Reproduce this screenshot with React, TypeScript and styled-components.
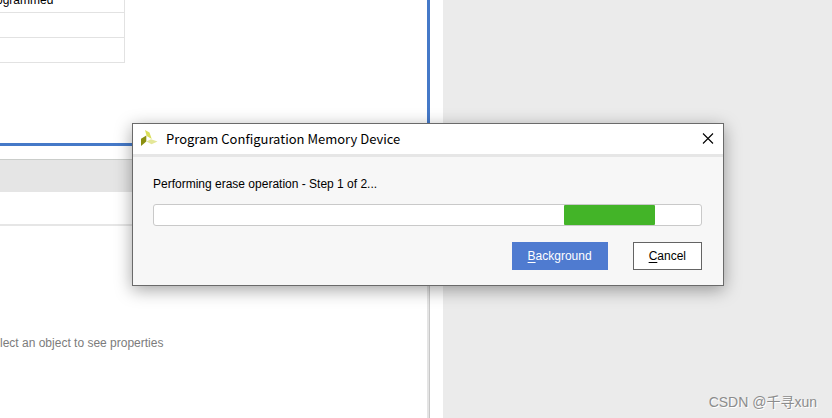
import React from "react";
import styled, { createGlobalStyle } from "styled-components";

const GlobalStyle = createGlobalStyle`
  *, *::before, *::after { box-sizing: border-box; }
  html, body, #root { height: 100%; }
  body {
    margin: 0;
    overflow: hidden;
    background: #ebebeb;
    color: #000;
    font: 12px/16px "Liberation Sans", Arial, sans-serif;
  }
`;

const Workspace = styled.div`
  position: relative;
  display: grid;
  grid-template-columns: minmax(0, 443fr) minmax(0, 389fr);
  height: 100%;
  overflow: hidden;
`;

const Column = styled.div`
  display: flex;
  flex-direction: column;
  gap: 13px;
  padding-right: 13px;
  background: #fff;
`;

const HardwarePanel = styled.section`
  height: 146px;
  overflow: hidden;
  border: solid #4579c8;
  border-width: 0 3px 3px 0;
`;

const StatusTable = styled.table`
  width: 129px;
  margin: -13px 0 0 -4px;
  border-collapse: separate;
  border-spacing: 0;
`;

const StatusCell = styled.td`
  height: 26px;
  padding: 0;
  border: solid #e2e2e2;
  border-width: 0 1px 1px 0;
  line-height: 16px;

  tr + tr & { height: 25px; }
`;

const PropertiesPanel = styled.section`
  display: flex;
  flex: 1;
  flex-direction: column;
  border-right: 1px solid #c8c8c8;
  box-shadow: inset -2px 0 #e4e4e4;
`;

const PanelHeader = styled.header`
  height: 33px;
  border-top: 1px solid #cacdca;
  background: #e5e5e5;
`;

const PanelToolbar = styled.div`
  height: 34px;
  margin-right: 2px;
  border-bottom: 2px solid #e6e6e6;
`;

const EmptyMessage = styled.p`
  margin: 109px 0 0;
  color: #7c7c7c;
  white-space: nowrap;
`;

const SidePane = styled.aside`
  display: flex;
  align-items: flex-end;
  justify-content: flex-end;
  padding: 0 15px 5px;
`;

const Watermark = styled.span`
  color: #8c8c8c;
  font: 14px/22px "Liberation Sans", "Noto Sans CJK SC", sans-serif;
  text-shadow: 1px 1px #fff;
`;

const Dialog = styled.div`
  position: absolute;
  top: 123px;
  right: 108px;
  left: 132px;
  border: 1px solid #6a6a6a;
  background: #f7f7f7;
  box-shadow: 0 4px 16px rgba(0, 0, 0, 0.36);
`;

const TitleBar = styled.header`
  display: flex;
  align-items: center;
  height: 33px;
  padding: 0 7px;
  border-bottom: 3px solid #e6e6e6;
  background: #fff;
`;

const Title = styled.h1`
  flex: 1;
  margin: 0 0 0 8px;
  font: 400 13px/16px "Noto Sans CJK SC", sans-serif;
`;

const CloseButton = styled.button`
  display: flex;
  padding: 2px;
  border: 0;
  background: none;
  color: #000;
`;

const DialogBody = styled.div`
  padding: 19px 21px 15px 20px;
`;

const ProgressLabel = styled.p`
  margin: 0 0 12px;
`;

const ProgressTrack = styled.div`
  display: flex;
  height: 22px;
  border: 1px solid #c9c9c9;
  border-radius: 3px;
  background: #fff;
`;

const ProgressBlock = styled.div`
  width: 91px;
  margin-left: 75%;
  border-radius: 1px;
  background: #43b428;
`;

const Actions = styled.div`
  display: flex;
  justify-content: flex-end;
  gap: 25px;
  margin-top: 16px;
`;

const ActionButton = styled.button<{ $primary?: boolean }>`
  height: 28px;
  padding: 0 15px;
  border: 1px solid ${({ $primary }) => ($primary ? "#4f7bd0" : "#646464")};
  border-radius: 0;
  background: ${({ $primary }) => ($primary ? "#4f7bd0" : "#fff")};
  color: ${({ $primary }) => ($primary ? "#fff" : "#000")};
  font: inherit;
`;

const Mnemonic = styled.u`
  text-underline-offset: 2px;
`;

function AppLogo() {
  return (
    <svg width="18" height="18" viewBox="0 0 18 18" aria-hidden="true">
      <path d="M5 0 9.5 2.5 11.7 9 6.7 6z" fill="#dade58" />
      <path d="M1 8.7 6.3 5.5V11.5L1 16z" fill="#8b9010" />
      <path d="M6.5 11.5 11 9.3 17.5 11.5 11.5 14.2z" fill="#e4e798" />
    </svg>
  );
}

export default function App() {
  return (
    <>
      <GlobalStyle />
      <Workspace>
        <Column>
          <HardwarePanel>
            <StatusTable>
              <tbody>
                <tr><StatusCell>ogrammed</StatusCell></tr>
                <tr><StatusCell /></tr>
                <tr><StatusCell /></tr>
              </tbody>
            </StatusTable>
          </HardwarePanel>
          <PropertiesPanel>
            <PanelHeader />
            <PanelToolbar />
            <EmptyMessage>lect an object to see properties</EmptyMessage>
          </PropertiesPanel>
        </Column>
        <SidePane>
          <Watermark>CSDN @千寻xun</Watermark>
        </SidePane>
        <Dialog role="dialog" aria-labelledby="dialog-title">
          <TitleBar>
            <AppLogo />
            <Title id="dialog-title">Program Configuration Memory Device</Title>
            <CloseButton type="button" aria-label="Close">
              <svg width="12" height="12" viewBox="0 0 12 12" aria-hidden="true">
                <path d="M1 0.5 11 10.5M11 0.5 1 10.5" stroke="currentColor" strokeWidth="1.1" />
              </svg>
            </CloseButton>
          </TitleBar>
          <DialogBody>
            <ProgressLabel id="progress-label">Performing erase operation - Step 1 of 2...</ProgressLabel>
            <ProgressTrack role="progressbar" aria-labelledby="progress-label">
              <ProgressBlock />
            </ProgressTrack>
            <Actions>
              <ActionButton type="button" $primary>
                <Mnemonic>B</Mnemonic>ackground
              </ActionButton>
              <ActionButton type="button">
                <Mnemonic>C</Mnemonic>ancel
              </ActionButton>
            </Actions>
          </DialogBody>
        </Dialog>
      </Workspace>
    </>
  );
}
